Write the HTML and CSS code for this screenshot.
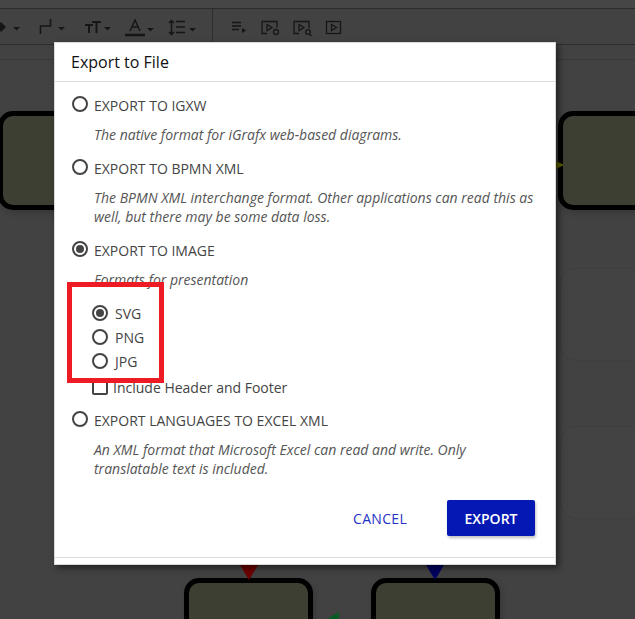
FILE: index.html
```html
<!DOCTYPE html>
<html lang="en">
<head>
<meta charset="utf-8">
<title>Export to File</title>
<link rel="stylesheet" href="styles.css">
</head>
<body>
<div class="app">
  <div class="topbar"></div>
  <div class="toolbar">
    <svg class="tools-a" width="212" height="44" viewBox="0 0 212 44" fill="none" stroke="#161616" stroke-width="1.5">
      <path d="M-3 27l5-5 5 5-5 5z" fill="#161616" stroke="none" transform="translate(-1,0)"/>
      <path d="M13 27h7l-3.500 3.500z" fill="#161616" stroke="none"/>
      <path d="M40.500 34v-8h10v-7" stroke-width="1.600"/>
      <path d="M58 27h7l-3.500 3.500z" fill="#161616" stroke="none"/>
      <path d="M85 25h8M89 25v8M92 22h9M96.500 22v11" stroke-width="2"/>
      <path d="M104 27h7l-3.500 3.500z" fill="#161616" stroke="none"/>
      <path d="M130 31l5-11 5 11M131.500 27h7" stroke-width="1.500"/>
      <path d="M125 35h20" stroke-width="2.500"/>
      <path d="M147 28h7l-3.500 3.500z" fill="#161616" stroke="none"/>
      <path d="M171.500 21v13M169 23l2.500-2.500 2.500 2.500M169 32l2.500 2.500 2.500-2.500M176 21.500h9M176 27h9M176 32.500h9"/>
      <path d="M189 28h7l-3.500 3.500z" fill="#161616" stroke="none"/>
    </svg>
    <svg class="tools-b" width="130" height="44" viewBox="0 0 130 44" fill="none" stroke="#161616" stroke-width="1.300">
      <path d="M19 22.500h9M19 26h9M19 29.500h7"/>
      <path d="M29 28l4 2.500-4 2.500z" fill="#161616" stroke="none"/>
      <path d="M54 33.500h-5v-12h15v6"/>
      <path d="M54 24.500l5 3-5 3z"/>
      <circle cx="63" cy="32" r="2.500"/>
      <path d="M86 33.500h-5v-12h15v7"/>
      <path d="M86 24.500l5 3-5 3z"/>
      <circle cx="95" cy="32" r="2.300"/>
      <path d="M96.500 34l2 2"/>
      <rect x="113.500" y="21.500" width="14" height="12"/>
      <path d="M118.500 24.500l5 3-5 3z"/>
    </svg>
  </div>
  <div class="ruler"></div>
  <div class="canvas">
    <div class="node node-left"></div>
    <div class="node node-right"></div>
    <div class="ghost ghost-one"></div>
    <div class="ghost ghost-two"></div>
    <div class="node node-bl"></div>
    <div class="node node-br"></div>
    <div class="tri tri-red"></div>
    <div class="tri tri-blue"></div>
    <div class="tri-green"></div>
    <div class="tri-yellow"></div>
  </div>
</div>

<div class="dialog">
  <h1 class="title">Export to File</h1>
  <div class="body">
    <label class="option">
      <span class="radio"></span><span class="option-label">EXPORT TO IGXW</span>
    </label>
    <p class="desc desc-single">The native format for iGrafx web-based diagrams.</p>

    <label class="option">
      <span class="radio"></span><span class="option-label">EXPORT TO BPMN XML</span>
    </label>
    <p class="desc desc-bpmn">The BPMN XML interchange format. Other applications can read this as well, but there may be some data loss.</p>

    <label class="option">
      <span class="radio checked"></span><span class="option-label">EXPORT TO IMAGE</span>
    </label>
    <p class="desc desc-formats">Formats for presentation</p>

    <div class="formats">
      <label class="format"><span class="radio checked"></span><span class="format-label">SVG</span></label>
      <label class="format"><span class="radio"></span><span class="format-label">PNG</span></label>
      <label class="format"><span class="radio"></span><span class="format-label">JPG</span></label>
    </div>
    <label class="include"><span class="check"></span><span>Include Header and Footer</span></label>

    <label class="option">
      <span class="radio"></span><span class="option-label">EXPORT LANGUAGES TO EXCEL XML</span>
    </label>
    <p class="desc">An XML format that Microsoft Excel can read and write. Only translatable text is included.</p>

    <div class="actions">
      <button class="btn-cancel" type="button">CANCEL</button>
      <button class="btn-export" type="button">EXPORT</button>
    </div>
  </div>
  <div class="footer"></div>
</div>

<div class="highlight"></div>
</body>
</html>
```

FILE: styles.css
```css
* { box-sizing: border-box; }

html, body {
  margin: 0;
  padding: 0;
  height: 100%;
}

body {
  width: 635px;
  height: 619px;
  overflow: hidden;
  position: relative;
  background: #424242;
  font-family: "Open Sans", sans-serif;
  color: #424242;
}

.app {
  height: 619px;
  display: flex;
  flex-direction: column;
  overflow: hidden;
}

.topbar {
  height: 9px;
  background: #464646;
  border-bottom: 1px solid #2c2c2c;
  flex: none;
}

.toolbar {
  height: 36px;
  background: #424242;
  border-bottom: 1px solid #2e2e2e;
  display: flex;
  flex: none;
  overflow: hidden;
}

.tools-a {
  width: 213px;
  margin-top: -9px;
  border-right: 1px solid #2e2e2e;
  overflow: hidden;
  flex: none;
  height: 44px;
}

.tools-b {
  margin-top: -9px;
  flex: none;
}

.ruler {
  height: 15px;
  background: #424242;
  border-bottom: 1px solid #383838;
  flex: none;
}

.canvas {
  flex: 1;
  position: relative;
  background: #424242;
  overflow: hidden;
}

.node {
  position: absolute;
  background: #3e3f33;
  border: 5px solid #000;
  border-radius: 15px;
  box-shadow: 2px 3px 6px rgba(0, 0, 0, 0.18);
}

.node-left { left: -2px; top: 51px; width: 100px; height: 99px; }
.node-right { left: 558px; top: 51px; width: 140px; height: 99px; }
.node-bl { left: 184px; top: 518px; width: 129px; height: 90px; }
.node-br { left: 371px; top: 518px; width: 129px; height: 90px; }

.ghost {
  position: absolute;
  left: 561px;
  width: 120px;
  height: 91px;
  border-radius: 15px;
  background: #434343;
  box-shadow: 0 0 2px rgba(0, 0, 0, 0.15);
}

.ghost-one { top: 209px; }
.ghost-two { top: 367px; }

.tri {
  position: absolute;
  top: 505px;
  width: 0;
  height: 0;
  border-left: 9px solid transparent;
  border-right: 9px solid transparent;
  border-top: 15px solid #6b0000;
}

.tri-red { left: 240px; }
.tri-blue { left: 426px; border-top-color: #00005e; }

.tri-green {
  position: absolute;
  left: 325px;
  top: 552px;
  width: 0;
  height: 0;
  border-bottom: 8px solid #0a5a28;
  border-left: 14px solid transparent;
}

.tri-yellow {
  position: absolute;
  left: 556px;
  top: 101px;
  width: 0;
  height: 0;
  border-left: 8px solid #5c5c00;
  border-top: 4px solid transparent;
  border-bottom: 4px solid transparent;
}

.dialog {
  position: absolute;
  left: 54px;
  top: 42px;
  width: 502px;
  height: 523px;
  background: #fff;
  border: 1px solid #d9d9d9;
  box-shadow: 3px 3px 6px rgba(0, 0, 0, 0.5);
  display: flex;
  flex-direction: column;
}

.title {
  margin: 0;
  height: 39px;
  padding: 8px 0 0 16px;
  border-bottom: 1px solid #dcdcdc;
  font-size: 16px;
  line-height: 22px;
  font-weight: 500;
  color: #111;
  flex: none;
}

.body {
  flex: 1;
  padding: 12px 16px 0 17px;
}

.option {
  display: flex;
  align-items: center;
  height: 22px;
  font-size: 14px;
  color: #444;
}

.option .radio { margin-bottom: 2px; }

.option-label { margin-left: 6px; }

.radio {
  width: 16px;
  height: 16px;
  flex: none;
  border: 2px solid #444;
  border-radius: 50%;
  background: #fff;
  display: flex;
  align-items: center;
  justify-content: center;
}

.radio.checked::after {
  content: "";
  width: 8px;
  height: 8px;
  border-radius: 50%;
  background: #444;
}

.desc {
  margin: 9px 0 9px 22px;
  width: 445px;
  font-size: 14px;
  line-height: 19px;
  font-style: italic;
  color: #555;
}

.desc-single { margin-bottom: 13px; }
.desc-bpmn { margin-bottom: 13px; }
.desc-formats { margin: 9px 0 0 22px; }

.formats {
  margin: 12px 0 0 20px;
}

.format {
  display: flex;
  align-items: center;
  height: 24px;
  font-size: 14px;
  color: #444;
}

.format-label { margin-left: 7px; }

.include {
  display: flex;
  align-items: center;
  margin: 3px 0 0 20px;
  height: 22px;
  font-size: 14px;
  color: #444;
}

.check {
  width: 16px;
  height: 16px;
  margin-right: 5px;
  border: 2px solid #444;
  border-radius: 2px;
  flex: none;
}

.include + .option { margin-top: 11px; }

.actions {
  display: flex;
  justify-content: flex-end;
  align-items: center;
  margin-top: 22px;
  gap: 40px;
  padding-right: 4px;
}

.btn-cancel {
  border: 0;
  background: none;
  padding: 0;
  font-family: inherit;
  font-size: 14px;
  font-weight: 500;
  letter-spacing: 0.3px;
  color: #2433c4;
}

.btn-export {
  width: 88px;
  height: 36px;
  border: 0;
  border-radius: 2px;
  background: #0418b4;
  color: #fff;
  font-family: inherit;
  font-size: 14px;
  font-weight: 600;
  box-shadow: 1px 2px 3px rgba(0, 0, 0, 0.25);
}

.footer {
  height: 7px;
  border-top: 1px solid #dcdcdc;
  flex: none;
}

.highlight {
  position: absolute;
  left: 67px;
  top: 282px;
  width: 97px;
  height: 101px;
  border: 5px solid #ed1c24;
}
```
